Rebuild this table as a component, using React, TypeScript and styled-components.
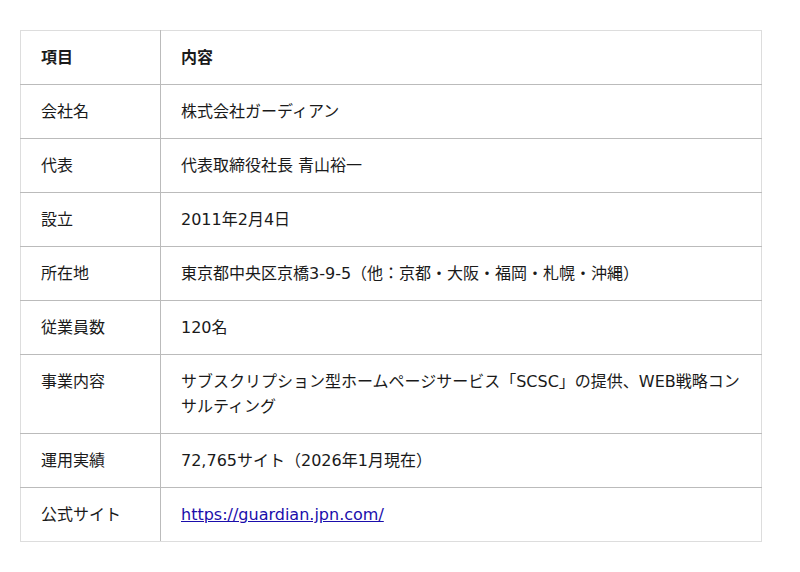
import styled, { createGlobalStyle } from "styled-components";

const GlobalStyle = createGlobalStyle`
    body {
        margin: 0;
        background: #ffffff;
        color: #1a1a1a;
        font-family: "DejaVu Sans", "Noto Sans CJK JP", sans-serif;
    }
`;

interface IRow {
    label: string;
    value: string;
    href?: string;
};

const rows: IRow[] = [
    { label: "会社名", value: "株式会社ガーディアン" },
    { label: "代表", value: "代表取締役社長 青山裕一" },
    { label: "設立", value: "2011年2月4日" },
    { label: "所在地", value: "東京都中央区京橋3-9-5（他：京都・大阪・福岡・札幌・沖縄）" },
    { label: "従業員数", value: "120名" },
    { label: "事業内容", value: "サブスクリプション型ホームページサービス「SCSC」の提供、WEB戦略コンサルティング" },
    { label: "運用実績", value: "72,765サイト（2026年1月現在）" },
    { label: "公式サイト", value: "https://guardian.jpn.com/", href: "https://guardian.jpn.com/" },
];

export default function App () {
    return (
        <>
            <GlobalStyle />
            <Wrapper>
                <Table>
                    <thead>
                        <tr>
                            <HeadCell $first>項目</HeadCell>
                            <HeadCell>内容</HeadCell>
                        </tr>
                    </thead>
                    <tbody>
                        {rows.map(row => (
                            <tr key={row.label}>
                                <Cell $first>{row.label}</Cell>
                                <Cell>
                                    {row.href
                                        ? <Link href={row.href}>{row.value}</Link>
                                        : row.value}
                                </Cell>
                            </tr>
                        ))}
                    </tbody>
                </Table>
            </Wrapper>
        </>
    )
}

const Wrapper = styled.div`
    padding: 30px 38px 30px 20px;
`;
const Table = styled.table`
    width: 742px;
    border-collapse: collapse;
    border: 1px solid #dddddd;
    font-size: 16px;
    line-height: 25px;
    tr:last-child td {
        border-bottom: 1px solid #dddddd;
    }
`;
const Cell = styled.td<{ $first?: boolean }>`
    padding: 14px 20px 14px 20px;
    vertical-align: top;
    text-align: left;
    border-bottom: 1px solid #bbbbbb;
    ${({ $first }) => $first ? `
        width: 99px;
        border-right: 1px solid #bbbbbb;
    ` : ""}
`;
const HeadCell = styled.th<{ $first?: boolean }>`
    padding: 14px 20px 14px 20px;
    text-align: left;
    font-weight: bold;
    border-bottom: 1px solid #bbbbbb;
    ${({ $first }) => $first ? `
        width: 99px;
        border-right: 1px solid #bbbbbb;
    ` : ""}
`;
const Link = styled.a`
    color: #1a0dab;
    text-decoration: underline;
`;
